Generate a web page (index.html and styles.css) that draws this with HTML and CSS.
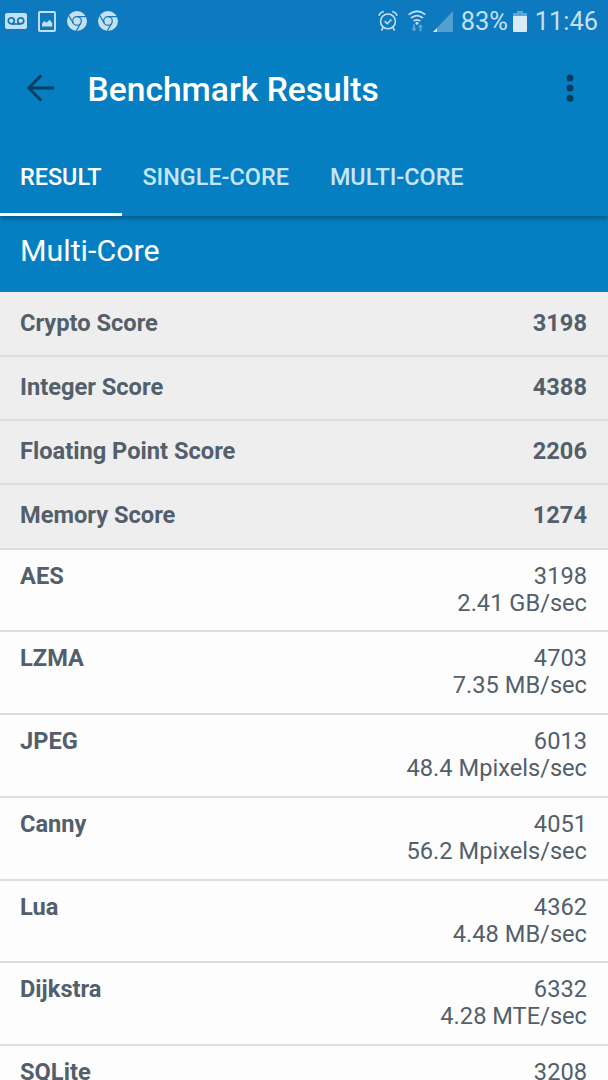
FILE: index.html
```html
<!DOCTYPE html>
<html lang="en">
<head>
    <meta charset="UTF-8">
    <meta name="viewport" content="width=device-width, initial-scale=1.0">
    <title>Benchmark Results</title>
    <link rel="stylesheet" href="styles.css">
</head>
<body>
    <header class="header">
        <div class="status-bar">
            <div class="status-icons">
                <svg width="22" height="16" viewBox="0 0 22 16">
                    <rect width="22" height="16" rx="2" fill="#c4e0f1"/>
                    <g fill="none" stroke="#1277bb" stroke-width="1.7">
                        <circle cx="6.3" cy="7.8" r="3"/>
                        <circle cx="15.7" cy="7.8" r="3"/>
                        <path d="M6.3 11h9.4"/>
                    </g>
                </svg>
                <svg width="18" height="21" viewBox="0 0 18 21">
                    <rect x="1" y="1" width="16" height="19" rx="1" fill="none" stroke="#c4e0f1" stroke-width="1.9"/>
                    <path d="M4 15.5v-3l2.5-2.5 2 1.7 3-3 2.7 3.3v3.5z" fill="#c4e0f1"/>
                </svg>
                <svg width="20" height="20" viewBox="0 0 20 20">
                    <circle cx="10" cy="10" r="10" fill="#c4e0f1"/>
                    <g fill="none" stroke="#1277bb" stroke-width="1.2">
                        <circle cx="10" cy="10" r="4.3"/>
                        <path d="M10 5.7h9M6.3 12.2L1.8 4.6M13.7 12.2L9.3 20"/>
                    </g>
                </svg>
                <svg width="20" height="20" viewBox="0 0 20 20">
                    <circle cx="10" cy="10" r="10" fill="#c4e0f1"/>
                    <g fill="none" stroke="#1277bb" stroke-width="1.2">
                        <circle cx="10" cy="10" r="4.3"/>
                        <path d="M10 5.7h9M6.3 12.2L1.8 4.6M13.7 12.2L9.3 20"/>
                    </g>
                </svg>
            </div>
            <div class="status-info">
                <svg class="alarm" width="20" height="22" viewBox="0 0 20 22">
                    <g fill="none" stroke="#c4e0f1" stroke-width="1.6">
                        <circle cx="10" cy="11.4" r="7.4"/>
                        <path d="M6.7 11.2l2.6 2.5 4.2-4.2M1 5.8Q1.8 2.5 5.8 1.5M19 5.8q-.8-3.3-4.8-4.3M5 17.4l-1.5 3.2M15 17.4l1.5 3.2"/>
                    </g>
                </svg>
                <svg class="wifi" width="18" height="22" viewBox="0 0 18 22">
                    <g fill="none" stroke="#c4e0f1" stroke-width="1.8">
                        <path d="M.7 4.6q8.3-6.8 16.6 0M3.1 8q5.9-4.8 11.8 0M5.6 11.1q3.4-2.6 6.8 0"/>
                    </g>
                    <circle cx="9" cy="13.2" r="1.5" fill="#c4e0f1"/>
                    <path d="M5 14.5h2v4h1.7L6 21.5l-2.7-3H5zM11.5 21.2v-4H9.8l2.7-3 2.7 3h-1.7v4z" fill="#5fa7d5"/>
                </svg>
                <svg class="signal" width="20" height="21" viewBox="0 0 20 21">
                    <path d="M0 21L20 0v21z" fill="#539fd0"/>
                    <path d="M0 21l4-4v4z" fill="#d6ebf7"/>
                </svg>
                <span class="percent">83%</span>
                <svg class="battery" width="14" height="21" viewBox="0 0 14 21">
                    <path d="M4 0h6v2h4v4H0V2h4z" fill="#5ea6d3"/>
                    <path d="M0 5h14v15a1 1 0 0 1-1 1H1a1 1 0 0 1-1-1z" fill="#d9ebf7"/>
                </svg>
                <span class="time">11:46</span>
            </div>
        </div>
        <div class="toolbar">
            <svg class="back" width="27" height="28" viewBox="0 0 27 28">
                <path d="M14.3 1.2L1.8 14l12.5 12.8M2 14h25" fill="none" stroke="#053f60" stroke-width="3"/>
            </svg>
            <h1>Benchmark Results</h1>
            <svg class="more" width="8" height="28" viewBox="0 0 8 28">
                <g fill="#053f60">
                    <circle cx="4" cy="4" r="3.5"/>
                    <circle cx="4" cy="14.1" r="3.5"/>
                    <circle cx="4" cy="24.2" r="3.5"/>
                </g>
            </svg>
        </div>
        <nav class="tabs">
            <div class="tab active">RESULT</div>
            <div class="tab">SINGLE-CORE</div>
            <div class="tab">MULTI-CORE</div>
        </nav>
    </header>
    <main>
        <h2 class="section-title">Multi-Core</h2>
        <div class="row score first"><b>Crypto Score</b><b>3198</b></div>
        <div class="row score"><b>Integer Score</b><b>4388</b></div>
        <div class="row score"><b>Floating Point Score</b><b>2206</b></div>
        <div class="row score"><b>Memory Score</b><b>1274</b></div>
        <div class="row"><b>AES</b><div class="value">3198<br>2.41 GB/sec</div></div>
        <div class="row"><b>LZMA</b><div class="value">4703<br>7.35 MB/sec</div></div>
        <div class="row"><b>JPEG</b><div class="value">6013<br>48.4 Mpixels/sec</div></div>
        <div class="row"><b>Canny</b><div class="value">4051<br>56.2 Mpixels/sec</div></div>
        <div class="row"><b>Lua</b><div class="value">4362<br>4.48 MB/sec</div></div>
        <div class="row"><b>Dijkstra</b><div class="value">6332<br>4.28 MTE/sec</div></div>
        <div class="row"><b>SQLite</b><div class="value">3208</div></div>
    </main>
</body>
</html>
```

FILE: styles.css
```css
*{
    box-sizing: border-box;
}
body{
    margin: 0;
    height: 100vh;
    overflow: hidden;
    display: flex;
    flex-direction: column;
    font-family: Roboto, sans-serif;
    font-size: 23.65px;
    line-height: 27px;
    color: #535f6b;
    background-color: #fdfdfd;
}
svg{
    display: block;
    flex-shrink: 0;
}
.header{
    height: 215.5px;
    flex-shrink: 0;
    position: relative;
    z-index: 1;
    color: #fff;
    background-color: #057fc1;
    box-shadow: 0 2px 5px rgba(0, 0, 0, 0.35);
}
.status-bar{
    height: 42px;
    padding: 0 10px 0 5px;
    display: flex;
    justify-content: space-between;
    align-items: center;
    background-color: #0d79be;
}
.status-icons{
    display: flex;
    align-items: center;
    gap: 11px;
}
.status-info{
    display: flex;
    align-items: center;
    font-size: 25.4px;
    color: #c4e0f1;
}
.wifi{
    margin-left: 10px;
}
.signal{
    margin: 0 8px 0 7px;
}
.battery{
    margin: 0 8px 0 5px;
}
.toolbar{
    height: 91px;
    padding: 0 34px 0 27px;
    display: flex;
    align-items: center;
}
.toolbar h1{
    margin: 0 auto 0 33.5px;
    padding-top: 3px;
    font-size: 33.6px;
    font-weight: 500;
}
.tabs{
    height: 82.5px;
    display: flex;
}
.tab{
    padding: 31px 20.5px 0 20.5px;
    font-size: 23.4px;
    font-weight: 500;
    color: #c5e5f9;
}
.tab.active{
    padding-left: 20px;
    color: #fff;
    border-bottom: 3px solid #fff;
}
.section-title{
    height: 76px;
    margin: 0;
    padding: 17px 20px;
    font-size: 30.4px;
    line-height: 36px;
    font-weight: 400;
    color: #fff;
    background-color: #057fc1;
}
.row{
    height: 82.75px;
    padding: 13px 21px 0 20px;
    display: flex;
    justify-content: space-between;
    border-bottom: 2px solid #dcdddd;
}
.row b{
    font-weight: 700;
}
.row.score{
    height: 64.2px;
    padding-top: 17px;
    background-color: #eee;
}
.row.score.first{
    height: 65.5px;
    padding-top: 18px;
}
.value{
    text-align: right;
}
```
